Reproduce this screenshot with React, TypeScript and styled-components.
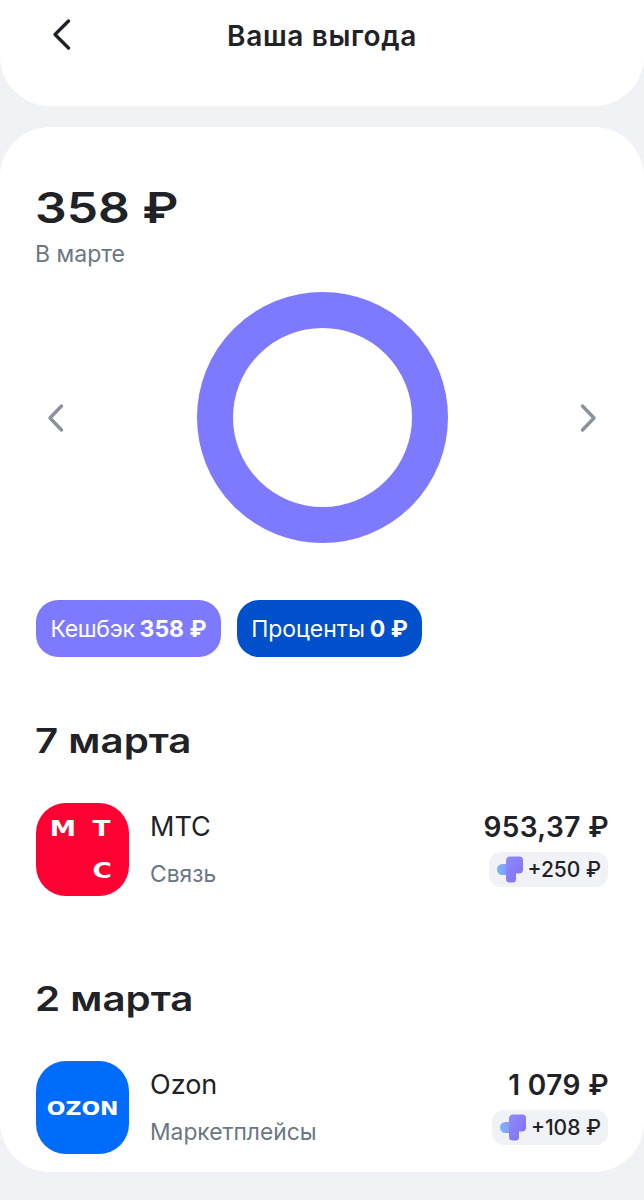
import React from 'react';
import styled, { createGlobalStyle } from 'styled-components';

const GlobalStyle = createGlobalStyle`
	html, body {
		margin: 0;
		padding: 0;
		background: #f0f2f6;
	}
	body {
		font-family: Inter, "Noto Sans", sans-serif;
		color: #1f2226;
	}
`;

const Page = styled.div`
	width: 644px;
	height: 1200px;
	overflow: hidden;
	background: #f0f2f6;
`;

const TopCard = styled.header`
	height: 106px;
	padding: 0 36px;
	box-sizing: border-box;
	background: #fff;
	border-radius: 0 0 50px 50px;
	position: relative;
`;

const TopRow = styled.div`
	height: 72px;
	display: flex;
	align-items: center;
	justify-content: center;
`;

const BackButton = styled.div`
	position: absolute;
	left: 50px;
	top: 18px;
	width: 26px;
	height: 34px;
	color: #1f2226;
`;

const Title = styled.h1`
	margin: 0;
	font-size: 28px;
	line-height: 36px;
	font-weight: 600;
	letter-spacing: 0.65px;
`;

const MainCard = styled.main`
	margin-top: 21px;
	height: 1045px;
	padding: 56px 36px 0;
	box-sizing: border-box;
	background: #fff;
	border-radius: 50px;
`;

const Wide = styled.div`
	margin-left: -1px;
	transform: scaleX(1.185);
	transform-origin: left center;
	white-space: nowrap;
`;

const Amount = styled(Wide)`
	font-size: 42px;
	line-height: 50px;
	font-weight: 600;
`;

const Caption = styled.div`
	margin: 6px 0 0 -1px;
	font-size: 23px;
	line-height: 30px;
	color: #6c7683;
`;

const ChartRow = styled.div`
	margin-top: 23px;
	display: flex;
	align-items: center;
	justify-content: space-between;
	padding: 0 10px;
	height: 251px;
`;

const ArrowIcon = styled.svg`
	width: 20px;
	height: 30px;
	color: #8a929c;
`;

const Pills = styled.div`
	margin-top: 57px;
	display: flex;
	gap: 16px;
`;

const Pill = styled.div<{ $bg: string }>`
	width: 185px;
	height: 57px;
	display: flex;
	align-items: center;
	justify-content: center;
	gap: 5px;
	border-radius: 22px;
	background: ${(p) => p.$bg};
	color: #fff;
	font-size: 23px;
`;

const PillLabel = styled.span<{ $tight?: boolean }>`
	white-space: nowrap;
	letter-spacing: ${(p) => (p.$tight ? '-0.3px' : '0')};
`;

const PillValue = styled.b`
	font-weight: 700;
`;

const DayTitle = styled(Wide)<{ $top: number }>`
	margin-top: ${(p) => p.$top}px;
	font-size: 34px;
	line-height: 44px;
	font-weight: 600;
`;

const Row = styled.div`
	margin-top: 40px;
	height: 93px;
	display: flex;
	align-items: stretch;
`;

const Logo = styled.div<{ $bg: string }>`
	width: 93px;
	height: 93px;
	flex: none;
	border-radius: 30px;
	background: ${(p) => p.$bg};
	color: #fff;
	font-family: "DejaVu Sans", sans-serif;
	font-weight: 700;
`;

const MtsLogo = styled(Logo)`
	display: grid;
	grid-template-columns: 39px 39px;
	grid-template-rows: 42px 42px;
	justify-content: center;
	align-content: center;
	justify-items: center;
	align-items: center;
	font-size: 22px;
`;

const MtsLetter = styled.span`
	transform: scaleX(1.2);
`;

const OzonLogo = styled(Logo)`
	display: flex;
	align-items: center;
	justify-content: center;
	font-size: 20px;
`;

const OzonWord = styled.span`
	transform: scaleX(1.1);
`;

const Info = styled.div`
	margin-left: 21px;
	flex: 1;
	display: flex;
	flex-direction: column;
	justify-content: space-between;
	padding: 6px 0 7px;
`;

const Name = styled.div`
	font-size: 27px;
	line-height: 36px;
`;

const Category = styled.div`
	font-size: 22.8px;
	line-height: 30px;
	color: #6c7683;
`;

const Right = styled.div`
	display: flex;
	flex-direction: column;
	align-items: flex-end;
	gap: 7px;
`;

const Price = styled.div`
	margin: 6px -1px 0 0;
	font-size: 28px;
	line-height: 36px;
	font-weight: 600;
	letter-spacing: 0.4px;
	white-space: nowrap;
`;

const Chip = styled.div`
	height: 35px;
	padding: 0 7px 0 8px;
	display: flex;
	align-items: center;
	gap: 5px;
	background: #f1f2f6;
	border-radius: 12px;
	font-size: 21px;
	font-weight: 500;
	white-space: nowrap;
`;

function Chevron({ left }: { left?: boolean }) {
	return (
		<ArrowIcon viewBox="0 0 20 30" fill="none">
			<path
				d={left ? 'M15.5 3 L4 15 L15.5 27' : 'M4.5 3 L16 15 L4.5 27'}
				stroke="currentColor"
				strokeWidth="3.4"
				strokeLinecap="round"
				strokeLinejoin="round"
			/>
		</ArrowIcon>
	);
}

function PlusMark({ id }: { id: string }) {
	return (
		<svg width="26" height="27" viewBox="0 0 26 27">
			<defs>
				<linearGradient id={id} x1="0" y1="0" x2="1" y2="1">
					<stop offset="0" stopColor="#8f8bfb" />
					<stop offset="1" stopColor="#7f6ff5" />
				</linearGradient>
				<linearGradient id={id + 'b'} x1="0" y1="0" x2="1" y2="0">
					<stop offset="0" stopColor="#78b6fc" />
					<stop offset="1" stopColor="#8a8cfa" />
				</linearGradient>
			</defs>
			<rect x="0" y="8" width="16" height="11" rx="5.5" fill={`url(#${id}b)`} />
			<path
				d="M13 0.5 H22.5 Q26 0.5 26 4 V13.5 Q26 17.5 22 17.5 H19 V23 Q19 26.5 15.5 26.5 H12.5 Q9 26.5 9 23 V5 Q9 0.5 13 0.5 Z"
				fill={`url(#${id})`}
			/>
		</svg>
	);
}

export default function App() {
	return (
		<Page>
			<GlobalStyle />
			<TopCard>
				<BackButton>
					<svg width="26" height="34" viewBox="0 0 26 34" fill="none">
						<path
							d="M18.5 3 L5 16.5 L18.5 30"
							stroke="currentColor"
							strokeWidth="3.4"
							strokeLinecap="round"
							strokeLinejoin="round"
						/>
					</svg>
				</BackButton>
				<TopRow>
					<Title>Ваша выгода</Title>
				</TopRow>
			</TopCard>
			<MainCard>
				<Amount>358 ₽</Amount>
				<Caption>В марте</Caption>
				<ChartRow>
					<Chevron left />
					<svg width="251" height="251" viewBox="0 0 251 251">
						<circle cx="125.5" cy="125.5" r="107.5" fill="none" stroke="#7d7aff" strokeWidth="36" />
					</svg>
					<Chevron />
				</ChartRow>
				<Pills>
					<Pill $bg="#7d7aff">
						<PillLabel $tight>Кешбэк</PillLabel>
						<PillValue>358 ₽</PillValue>
					</Pill>
					<Pill $bg="#0050cb">
						<PillLabel>Проценты</PillLabel>
						<PillValue>0 ₽</PillValue>
					</Pill>
				</Pills>
				<DayTitle $top={62}>7 марта</DayTitle>
				<Row>
					<MtsLogo $bg="#ff0032">
						<MtsLetter>М</MtsLetter>
						<MtsLetter>Т</MtsLetter>
						<span />
						<MtsLetter>С</MtsLetter>
					</MtsLogo>
					<Info>
						<Name>МТС</Name>
						<Category>Связь</Category>
					</Info>
					<Right>
						<Price>953,37 ₽</Price>
						<Chip>
							<PlusMark id="a" />
							+250 ₽
						</Chip>
					</Right>
				</Row>
				<DayTitle $top={81}>2 марта</DayTitle>
				<Row>
					<OzonLogo $bg="#006cfc">
						<OzonWord>OZON</OzonWord>
					</OzonLogo>
					<Info>
						<Name>Ozon</Name>
						<Category>Маркетплейсы</Category>
					</Info>
					<Right>
						<Price>1 079 ₽</Price>
						<Chip>
							<PlusMark id="b" />
							+108 ₽
						</Chip>
					</Right>
				</Row>
			</MainCard>
		</Page>
	);
}
